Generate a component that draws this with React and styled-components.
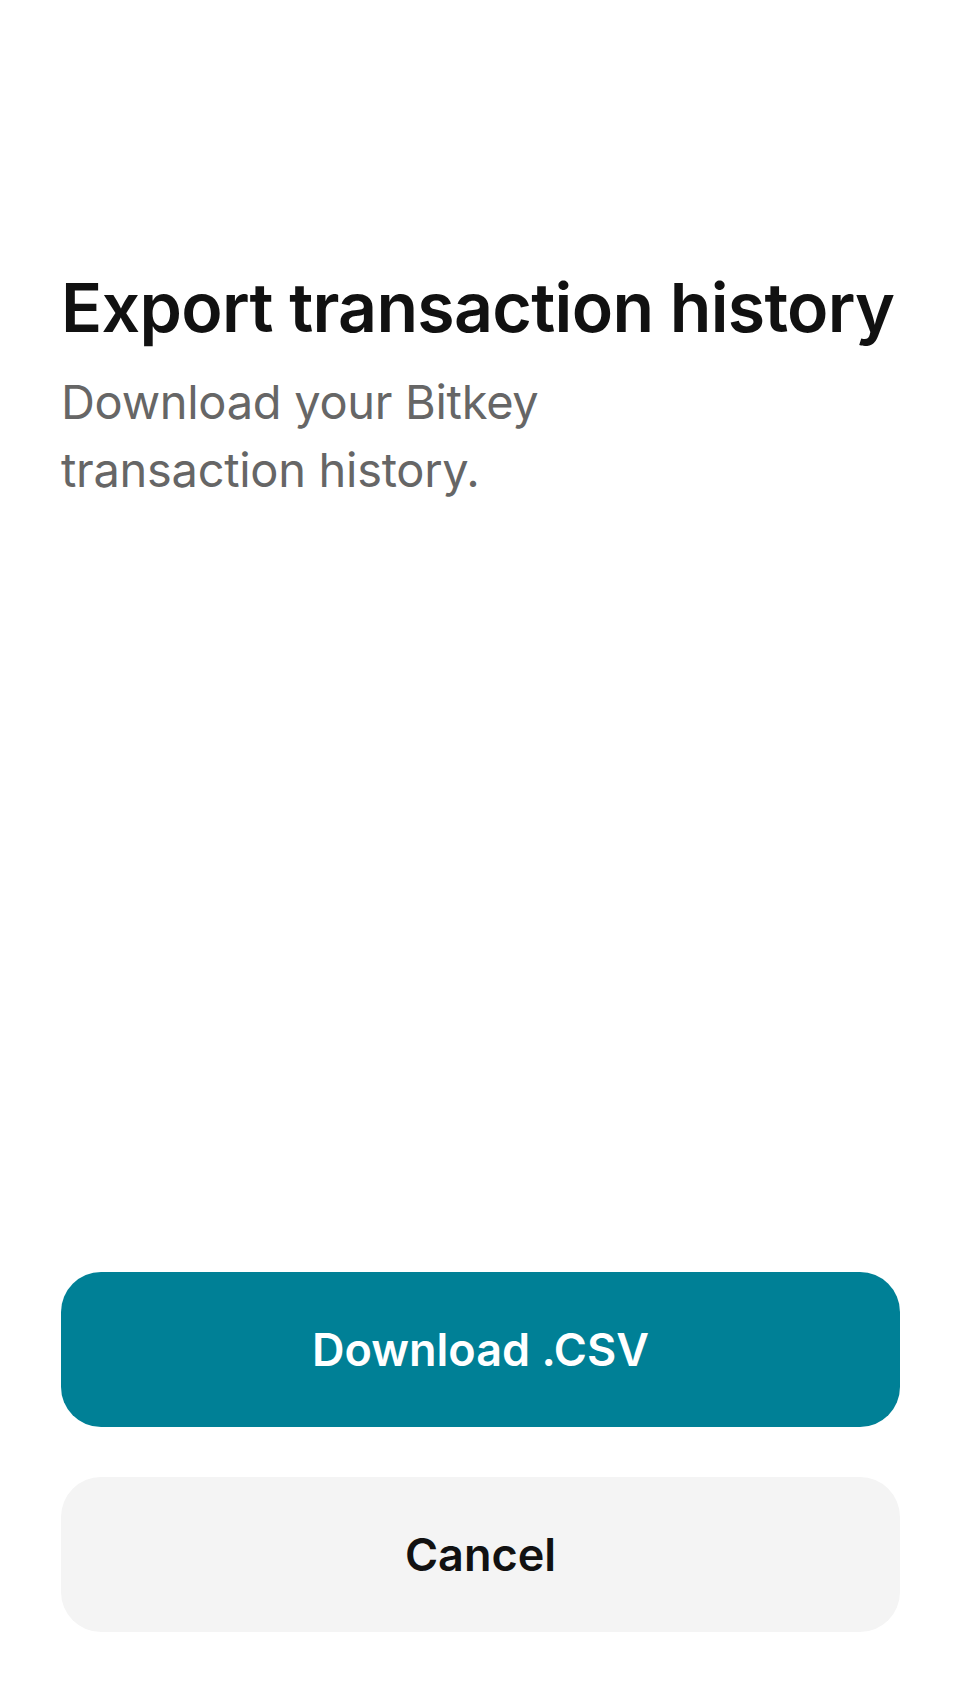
import styled, { createGlobalStyle } from "styled-components"

const GlobalStyle = createGlobalStyle`
  html, body {
    margin: 0;
    padding: 0;
    background: #ffffff;
  }
  body {
    font-family: Inter, "Noto Sans", "Liberation Sans", sans-serif;
    -webkit-font-smoothing: antialiased;
  }
`

const Screen = styled.div`
  box-sizing: border-box;
  width: 960px;
  height: 1704px;
  display: flex;
  flex-direction: column;
  padding: 265px 60px 72px 61px;
  background: #ffffff;
`

const Header = styled.header`
  display: flex;
  flex-direction: column;
  gap: 19px;
`

const Title = styled.h1`
  margin: 0;
  font-size: 68px;
  line-height: 84px;
  font-weight: 600;
  letter-spacing: -0.7px;
  color: #111111;
`

const Subtitle = styled.p`
  margin: 0;
  max-width: 560px;
  font-size: 47px;
  line-height: 68px;
  font-weight: 400;
  letter-spacing: -0.3px;
  color: #666666;
`

const Actions = styled.div`
  margin-top: auto;
  display: flex;
  flex-direction: column;
  gap: 50px;
`

const Button = styled.button`
  height: 155px;
  width: 100%;
  border: none;
  border-radius: 40px;
  font-family: inherit;
  font-size: 45px;
  font-weight: 600;
  cursor: pointer;
  background: ${(props) => (props.$primary ? "#008096" : "#f4f4f4")};
  color: ${(props) => (props.$primary ? "#ffffff" : "#111111")};
`

export default function App() {
  return (
    <>
      <GlobalStyle />
      <Screen>
        <Header>
          <Title>Export transaction history</Title>
          <Subtitle>Download your Bitkey transaction history.</Subtitle>
        </Header>
        <Actions>
          <Button $primary>Download .CSV</Button>
          <Button>Cancel</Button>
        </Actions>
      </Screen>
    </>
  )
}
